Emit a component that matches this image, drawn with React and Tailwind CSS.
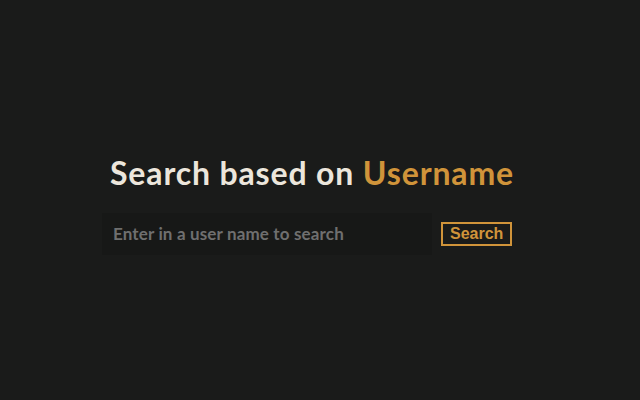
import React, { useState } from 'react';

const App = () => {
  const [username, setUsername] = useState('');

  return (
    <div className="min-h-screen w-full bg-[#1a1b1a] flex items-center justify-center pt-[11px] font-['Lato',sans-serif]">
      <div className="w-[436px] flex flex-col">
        <h1 className="ml-[8px] text-[32px] font-bold text-[#ece6dc] leading-none tracking-[0.85px] mb-[24px]">
          Search based on <span className="text-[#d0943a]">Username</span>
        </h1>
        <div className="flex items-center">
          <input
            value={username}
            onChange={(e) => setUsername(e.target.value)}
            placeholder="Enter in a user name to search"
            className="w-[330px] h-[42px] bg-[#171817] px-[11px] text-[17px] font-bold tracking-[0.15px] text-[#ece6dc] placeholder:text-[#6f6f6f] outline-none"
          />
          <button className="ml-[9px] h-[24px] px-[7px] border-2 border-[#d0943a] text-[#d0943a] text-[16px] font-bold leading-none font-['Liberation_Sans',Arial,sans-serif]">
            Search
          </button>
        </div>
      </div>
    </div>
  );
};

export default App;
